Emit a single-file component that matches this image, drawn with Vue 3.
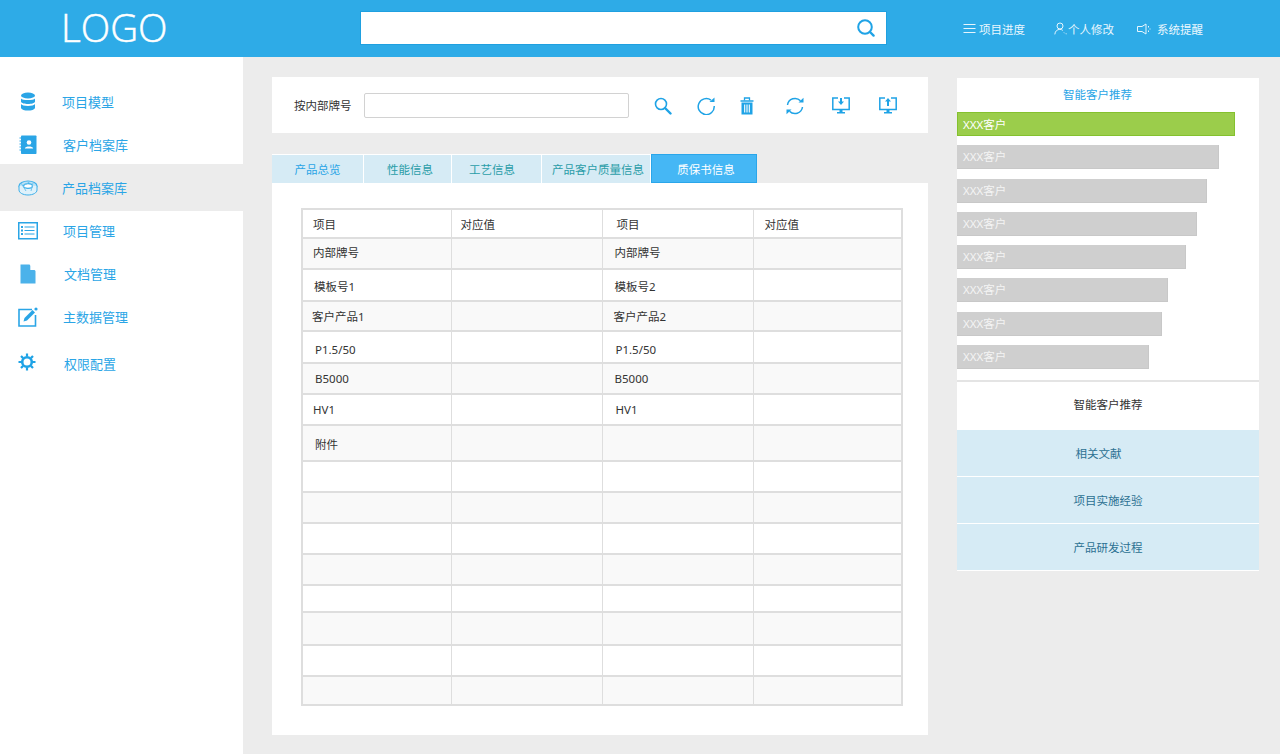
<template>
  <div class="page">
    <header class="topbar">
      <div class="logo">LOGO</div>
      <div class="top-search">
        <svg viewBox="0 0 20 20" width="20" height="20">
          <circle cx="9" cy="9" r="6.800" fill="none" stroke="#1fa3e6" stroke-width="2" />
          <path d="M14 14l3.600 3.600" stroke="#1fa3e6" stroke-width="2.400" stroke-linecap="round" />
        </svg>
      </div>
      <nav class="top-nav">
        <a class="top-link">
          <svg viewBox="0 0 13 11" width="13" height="11">
            <path d="M0.500 1.500h12M0.500 5.500h12M0.500 9.500h12" stroke="#e6f5fd" stroke-width="1" fill="none" />
          </svg>
          项目进度
        </a>
        <a class="top-link link-user">
          <svg viewBox="0 0 13 13" width="13" height="13">
            <circle cx="6" cy="4" r="3" fill="none" stroke="#e6f5fd" stroke-width="1" />
            <path d="M0.800 12.400c0.400-3.400 2.400-5 5-5 1.200 0 2.200 0.300 3 1M10 10.500l0.800 0.800M11.800 11.800h0.800" fill="none" stroke="#e6f5fd" stroke-width="1" />
          </svg>
          个人修改
        </a>
        <a class="top-link link-notice">
          <svg viewBox="0 0 14 12" width="14" height="12">
            <path d="M0.500 3.500h4.500l4-2.500v10l-4-2.500h-4.500z" fill="none" stroke="#e6f5fd" stroke-width="1" />
            <path d="M11.500 3v1.500M11.500 7.500v1.500M13 5.500v1" stroke="#e6f5fd" stroke-width="1" />
          </svg>
          系统提醒
        </a>
      </nav>
    </header>

    <div class="layout">
      <aside class="sidebar">
        <div
          v-for="item in menu"
          :key="item.name"
          class="menu-item"
          :class="{ active: item.active, last: item.last }"
        >
          <span class="menu-icon" :style="{ paddingLeft: item.iconShift + 'px' }">
            <svg v-if="item.icon === 'db'" viewBox="0 0 18 20" width="18" height="20">
              <ellipse cx="9" cy="3.500" rx="7" ry="3" fill="#2aa5e6" />
              <path d="M2 6.500c1 2 13 2 14 0v3.200c-1 3-13 3-14 0z" fill="#2aa5e6" />
              <path d="M2 12c1 2.600 13 2.600 14 0v4c-1 3.400-13 3.400-14 0z" fill="#2aa5e6" />
            </svg>
            <svg v-else-if="item.icon === 'book'" viewBox="0 0 18 20" width="18" height="20">
              <rect x="2" y="0.500" width="15.500" height="18.500" rx="0.800" fill="#2aa5e6" />
              <path d="M0.500 3h3M0.500 6h3M0.500 9h3M0.500 12h3M0.500 15h3" stroke="#2aa5e6" stroke-width="1.200" />
              <circle cx="10" cy="7.500" r="2.300" fill="#fff" />
              <path d="M5.800 13.500c0.600-2.600 7.800-2.600 8.400 0z" fill="#fff" />
            </svg>
            <svg v-else-if="item.icon === 'disc'" viewBox="0 0 20 16" width="20" height="16">
              <ellipse cx="10" cy="6" rx="9" ry="5" fill="#bfe3f6" stroke="#3fb0ea" stroke-width="1.200" />
              <path d="M1 6v4c0 2.800 4 5 9 5s9-2.200 9-5V6" fill="#dff1fa" stroke="#3fb0ea" stroke-width="1" />
              <ellipse cx="10" cy="6" rx="4.500" ry="2.300" fill="#fff" stroke="#3fb0ea" stroke-width="1.200" />
              <path d="M3 3l5 8M12 1.500l-6 4M13 11l2-8" stroke="#6fc4ee" stroke-width="1" fill="none" />
            </svg>
            <svg v-else-if="item.icon === 'list'" viewBox="0 0 20 18" width="20" height="18">
              <rect x="0.750" y="0.750" width="18.500" height="16" fill="none" stroke="#2aa5e6" stroke-width="1.500" />
              <path d="M3 5h2M3 8.500h2M3 12h2" stroke="#2aa5e6" stroke-width="2" />
              <path d="M6.500 5h10M6.500 8.500h10M6.500 12h10" stroke="#2aa5e6" stroke-width="1.200" />
            </svg>
            <svg v-else-if="item.icon === 'doc'" viewBox="0 0 16 20" width="16" height="20">
              <path d="M0.500 0.500h9l6 6.500v12.500h-15z" fill="#4bb2ea" />
              <path d="M10.300 0.500l5.200 5.600h-5.200z" fill="#fff" />
            </svg>
            <svg v-else-if="item.icon === 'edit'" viewBox="0 0 20 20" width="20" height="20">
              <path d="M14 2.500H1v16.500h16.500V8" fill="none" stroke="#2aa5e6" stroke-width="1.600" />
              <path d="M5.500 14.500l1-3.500 8-8 2.500 2.500-8 8z" fill="#2aa5e6" />
              <circle cx="18" cy="2" r="1.600" fill="#2aa5e6" />
            </svg>
            <svg v-else class="gear" viewBox="0 0 18 18" width="18" height="18">
              <circle cx="9" cy="9" r="4.800" fill="none" stroke="#1fa3e6" stroke-width="2.600" />
              <path d="M9 0.500v3M9 14.500v3M0.500 9h3M14.500 9h3M3 3l2.100 2.100M12.900 12.900L15 15M3 15l2.100-2.100M12.900 5.100L15 3" stroke="#1fa3e6" stroke-width="2.200" />
            </svg>
          </span>
          <span class="menu-text" :style="{ marginLeft: item.shift + 'px' }">{{ item.name }}</span>
        </div>
      </aside>

      <main class="center">
        <div class="toolbar">
          <label class="tool-label">按内部牌号</label>
          <input class="tool-input" type="text" />
          <div class="tool-icons">
            <svg viewBox="0 0 18 18" width="18" height="18">
              <circle cx="7" cy="7" r="5.500" fill="none" stroke="#1fa3e6" stroke-width="1.600" />
              <path d="M11 11l5.500 5.500" stroke="#1fa3e6" stroke-width="2.400" stroke-linecap="round" />
            </svg>
            <svg class="i-refresh" viewBox="0 0 18 18" width="18" height="18">
              <path d="M14 3.200A8 8 0 1 0 17.200 9" fill="none" stroke="#1fa3e6" stroke-width="1.500" />
              <path d="M12.500 5h5V0.500z" fill="#1fa3e6" />
            </svg>
            <svg class="i-trash" viewBox="0 0 14 18" width="14" height="18">
              <path d="M0.500 4h13" stroke="#1fa3e6" stroke-width="1.500" />
              <path d="M4.500 3.500V1h5v2.500" fill="none" stroke="#1fa3e6" stroke-width="1.300" />
              <path d="M1.500 5.500h11v12h-11z" fill="#1fa3e6" />
              <path d="M4.700 7.500v8M7 7.500v8M9.300 7.500v8" stroke="#fff" stroke-width="1.100" />
            </svg>
            <svg class="i-sync" viewBox="0 0 18 18" width="18" height="18">
              <path d="M1.500 8A7.600 7.600 0 0 1 14.500 3.800M16.500 10A7.600 7.600 0 0 1 3.500 14.200" fill="none" stroke="#1fa3e6" stroke-width="1.500" />
              <path d="M12.500 5.500h5V0.800zM5.500 12.500h-5v4.700z" fill="#1fa3e6" />
            </svg>
            <svg class="i-down" viewBox="0 0 18 18" width="18" height="18">
              <path d="M6 1H0.800v11.500h16.400V1H12" fill="none" stroke="#1fa3e6" stroke-width="1.500" />
              <path d="M8 1h2v3.500h2l-3 3.500-3-3.500h2z" fill="#1fa3e6" />
              <path d="M7.500 13h3v2h2.500v1.500H5V15h2.500z" fill="#1fa3e6" />
            </svg>
            <svg class="i-up" viewBox="0 0 18 18" width="18" height="18">
              <path d="M6 1H0.800v11.500h16.400V1H12" fill="none" stroke="#1fa3e6" stroke-width="1.500" />
              <path d="M8 9h2V4.500h2L9 1 6 4.500h2z" fill="#1fa3e6" />
              <path d="M7.500 13h3v2h2.500v1.500H5V15h2.500z" fill="#1fa3e6" />
            </svg>
          </div>
        </div>

        <div class="tabs">
          <div
            v-for="tab in tabs"
            :key="tab.name"
            class="tab"
            :class="{ current: tab.current, first: tab.first }"
            :style="{ width: tab.width + 'px', paddingLeft: tab.left + 'px', paddingRight: tab.right + 'px' }"
          >{{ tab.name }}</div>
        </div>

        <div class="panel">
          <table class="data-table">
            <colgroup>
              <col style="width: 149px" />
              <col style="width: 151px" />
              <col style="width: 151px" />
              <col style="width: 149px" />
            </colgroup>
            <tbody>
              <tr v-for="(row, index) in rows" :key="index" :style="{ height: row.h + 'px' }">
                <td :style="cellStyle(row.ax, row.dy)">{{ row.a }}</td>
                <td class="val-left">{{ row.av }}</td>
                <td :style="cellStyle(row.bx, row.dy)">{{ row.b }}</td>
                <td class="val-right">{{ row.bv }}</td>
              </tr>
            </tbody>
          </table>
        </div>
      </main>

      <aside class="right">
        <div class="rec-title">智能客户推荐</div>
        <div class="bars">
          <div
            v-for="(bar, index) in bars"
            :key="index"
            class="bar"
            :class="{ top: index === 0 }"
            :style="{ width: bar + 'px' }"
          >XXX客户</div>
        </div>
        <div class="side-tabs">
          <div class="side-tab selected">智能客户推荐</div>
          <div class="side-tab literature">相关文献</div>
          <div class="side-tab">项目实施经验</div>
          <div class="side-tab">产品研发过程</div>
        </div>
      </aside>
    </div>
  </div>
</template>

<script setup>
const menu = [
  { name: '项目模型', icon: 'db', shift: 0, iconShift: 2 },
  { name: '客户档案库', icon: 'book', shift: 1, iconShift: 2 },
  { name: '产品档案库', icon: 'disc', shift: 0, iconShift: 1, active: true },
  { name: '项目管理', icon: 'list', shift: 1, iconShift: 1 },
  { name: '文档管理', icon: 'doc', shift: 2, iconShift: 3 },
  { name: '主数据管理', icon: 'edit', shift: 1, iconShift: 1 },
  { name: '权限配置', icon: 'gear', shift: 2, iconShift: 0, last: true }
]

const tabs = [
  { name: '产品总览', width: 92, first: true, left: 0, right: 0 },
  { name: '性能信息', width: 88, left: 5, right: 0 },
  { name: '工艺信息', width: 90, left: 0, right: 9 },
  { name: '产品客户质量信息', width: 109, left: 4, right: 0 },
  { name: '质保书信息', width: 106, left: 4, right: 0, current: true }
]

const rows = [
  { h: 29, dy: 0, a: '项目', ax: 10, av: '对应值', b: '项目', bx: 14, bv: '对应值' },
  { h: 31, dy: -2, a: '内部牌号', ax: 10, b: '内部牌号', bx: 12 },
  { h: 32, dy: 1, a: '模板号1', ax: 11, b: '模板号2', bx: 12 },
  { h: 30, dy: 0, a: '客户产品1', ax: 9, b: '客户产品2', bx: 11 },
  { h: 32, dy: 2, a: 'P1.5/50', ax: 12, b: 'P1.5/50', bx: 13 },
  { h: 31, dy: 0, a: 'B5000', ax: 12, b: 'B5000', bx: 12 },
  { h: 31, dy: 0, a: 'HV1', ax: 10, b: 'HV1', bx: 13 },
  { h: 36, dy: 1, a: '附件', ax: 12, b: '', bx: 12 },
  { h: 31 },
  { h: 31 },
  { h: 31 },
  { h: 31 },
  { h: 27 },
  { h: 33 },
  { h: 31 },
  { h: 29 }
]

const bars = [278, 262, 250, 240, 229, 211, 205, 192]

// 表格文字在原图里上下不太齐，用 padding 微调
const cellStyle = (left, dy = 0) => ({
  paddingLeft: (left || 0) + 'px',
  paddingTop: (dy > 0 ? dy * 2 : 0) + 'px',
  paddingBottom: (dy < 0 ? -dy * 2 : 0) + 'px'
})
</script>

<style>
html,
body {
  margin: 0;
  background: #ececec;
  overflow: hidden;
}
</style>

<style scoped>
.page {
  min-height: 754px;
  font-family: "Noto Sans", "Noto Sans CJK SC", sans-serif;
  font-size: 11.5px;
  color: #333;
}

.topbar {
  height: 57px;
  background: #2eabe7;
  display: flex;
  align-items: center;
}

.logo {
  width: 361px;
  padding-left: 61px;
  margin-top: -4px;
  box-sizing: border-box;
  font-family: "Open Sans", sans-serif;
  font-weight: 300;
  font-size: 38.5px;
  color: #fff;
  -webkit-text-stroke: 0.5px #fff;
}

.top-search {
  width: 527px;
  height: 34px;
  margin-left: -1px;
  margin-top: -1px;
  box-sizing: border-box;
  background: #fff;
  border: 1px solid #1fa0e0;
  display: flex;
  align-items: center;
  justify-content: flex-end;
  padding-right: 10px;
}

.top-nav {
  display: flex;
  align-items: center;
  margin-left: 76px;
  color: #eaf7fe;
}

.top-link {
  display: flex;
  align-items: center;
  gap: 3px;
}

.link-user {
  margin-left: 29px;
  gap: 1px;
}

.link-notice {
  margin-left: 23px;
  gap: 6px;
}

.layout {
  display: flex;
  align-items: flex-start;
}

.sidebar {
  width: 243px;
  height: 697px;
  background: #fff;
  padding-top: 23px;
  box-sizing: border-box;
  flex-shrink: 0;
}

.menu-item {
  height: 43px;
  display: flex;
  align-items: center;
  padding-left: 17px;
  color: #2aa5e6;
  font-size: 13px;
}

.menu-item.active {
  height: 47px;
  margin: -2px 0;
  background: #ececec;
}

.menu-item.last {
  margin-top: 4px;
}

.menu-icon {
  width: 45px;
  box-sizing: border-box;
  display: flex;
  align-items: center;
}

.gear {
  margin-top: -3px;
  margin-left: 1px;
}

.center {
  width: 656px;
  margin-left: 29px;
  padding-top: 20px;
}

.toolbar {
  height: 56px;
  background: #fff;
  display: flex;
  align-items: center;
  padding-left: 22px;
  box-sizing: border-box;
}

.tool-label {
  width: 70px;
  flex-shrink: 0;
}

.tool-input {
  width: 265px;
  height: 25px;
  box-sizing: border-box;
  border: 1px solid #d2d2d2;
  border-radius: 2px;
  background: #fff;
  outline: none;
}

.tool-icons {
  display: flex;
  align-items: center;
  margin-left: 25px;
  padding-top: 2px;
}

.i-refresh,
.i-trash {
  margin-left: 25px;
}

.i-sync {
  margin-left: 32px;
}

.i-down {
  margin-left: 28px;
}

.i-up {
  margin-left: 29px;
}

.tabs {
  display: flex;
  margin-top: 21px;
  height: 29px;
}

.tab {
  box-sizing: border-box;
  background: #d6ebf5;
  color: #2a9da8;
  border-right: 1px solid #fff;
  border-top: 1px solid #fff;
  display: flex;
  align-items: center;
  justify-content: center;
}

.tab.first {
  color: #2aa5e6;
}

.tab.current {
  background: #45b7f5;
  color: #fff;
  border: 1px solid #2aa6ea;
}

.panel {
  height: 552px;
  background: #fff;
  padding: 25px 0 0 29px;
  box-sizing: border-box;
}

.data-table {
  width: 600px;
  table-layout: fixed;
  border-collapse: collapse;
  border: 2px solid #dedede;
}

.data-table td {
  border: 1px solid #dedede;
  border-bottom-width: 2px;
  padding: 0;
  box-sizing: border-box;
  color: #333;
}

.data-table tr:nth-child(even) td {
  background: #f9f9f9;
}

.data-table td.val-left {
  padding-left: 9px;
}

.data-table td.val-right {
  padding-left: 11px;
}

.right {
  width: 302px;
  margin-left: 29px;
  margin-top: 21px;
  background: #fff;
}

.rec-title {
  height: 34px;
  line-height: 33px;
  text-align: center;
  color: #2aa5e6;
  padding-right: 6px;
  box-sizing: border-box;
  text-indent: -15px;
}

.bars {
  display: flex;
  flex-direction: column;
  gap: 9.300px;
  padding-bottom: 11px;
  border-bottom: 2px solid #e4e4e4;
}

.bar {
  height: 24px;
  box-sizing: border-box;
  background: #cfcfcf;
  border: 1px solid #c8c8c8;
  border-width: 0 1px 1px 0;
  color: #f4f4f4;
  line-height: 23px;
  padding-left: 6px;
}

.bar.top {
  background: #9bcd4b;
  border: 1px solid #84c12e;
  color: #fff;
  padding-left: 5px;
}

.side-tab {
  height: 47px;
  box-sizing: border-box;
  background: #d6ebf5;
  color: #2c7192;
  border-bottom: 1px solid #fff;
  display: flex;
  align-items: center;
  justify-content: center;
}

.side-tab.literature {
  padding-right: 19px;
}

.side-tab.selected {
  height: 47px;
  margin-bottom: 1px;
  padding-bottom: 2px;
  background: #fff;
  color: #333;
}
</style>
